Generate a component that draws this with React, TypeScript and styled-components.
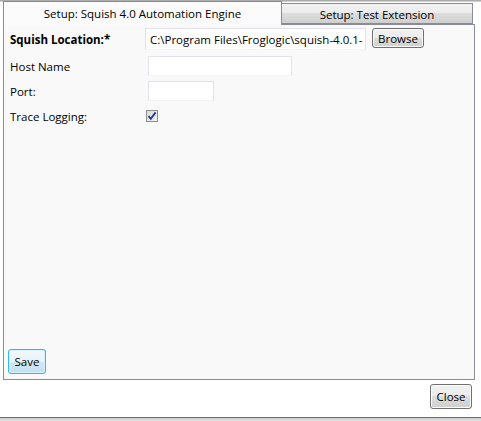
import React from 'react';
import styled, { createGlobalStyle } from 'styled-components';

const GlobalStyle = createGlobalStyle`
  html, body {
    margin: 0;
    padding: 0;
    background: #ffffff;
  }
  * {
    box-sizing: border-box;
  }
`;

const Window = styled.div`
  width: 481px;
  height: 421px;
  display: flex;
  flex-direction: column;
  background: #ffffff;
  font-family: "Open Sans", "Noto Sans", sans-serif;
  font-size: 11.5px;
  color: #000;
  overflow: hidden;
`;

const TabBar = styled.div`
  position: relative;
  height: 24px;
  display: flex;
  align-items: flex-end;
  padding-left: 3px;
  background: linear-gradient(to bottom, #8a8a8a 0, #cfcfcf 1px, #cfcfcf 2px, #ffffff 2px);
  z-index: 1;
`;

const Tab = styled.div<{ $active?: boolean; $width: number }>`
  width: ${p => p.$width}px;
  height: ${p => (p.$active ? 24 : 21)}px;
  margin-bottom: ${p => (p.$active ? -1 : 0)}px;
  display: flex;
  align-items: center;
  justify-content: center;
  border: 1px solid #898c95;
  border-bottom: ${p => (p.$active ? 'none' : '1px solid #898c95')};
  border-left: ${p => (p.$active ? '1px solid #898c95' : 'none')};
  background: ${p => (p.$active
    ? '#fbfbfb'
    : 'linear-gradient(to bottom, #f2f2f2 0%, #ebebeb 50%, #dddddd 50%, #cfcfcf 100%)')};
  padding-top: ${p => (p.$active ? 0 : 1)}px;
  white-space: nowrap;
`;

const Panel = styled.div`
  flex: none;
  height: 356px;
  margin: 0 6px 0 3px;
  border: 1px solid #898c95;
  background: #f9f9f9;
  display: flex;
  flex-direction: column;
  padding: 3px 0 5px 6px;
`;

const FieldRow = styled.div<{ $top: number }>`
  display: flex;
  align-items: flex-start;
  margin-top: ${p => p.$top}px;
`;

const Label = styled.div<{ $bold?: boolean; $height: number }>`
  width: 135px;
  height: ${p => p.$height}px;
  display: flex;
  align-items: center;
  font-weight: ${p => (p.$bold ? 700 : 400)};
  white-space: nowrap;
`;

const TextBox = styled.input<{ $indent: number; $width: number; $height: number }>`
  margin: 0 0 0 ${p => p.$indent}px;
  width: ${p => p.$width}px;
  height: ${p => p.$height}px;
  border: 1px solid #e2e3ea;
  border-bottom-color: #f4f4f4;
  background: #ffffff;
  font-family: inherit;
  font-size: 11.5px;
  color: #000;
  padding: 0 0 0 4px;
  outline: none;
`;

const Button = styled.button<{ $focused?: boolean; $width: number; $height: number }>`
  width: ${p => p.$width}px;
  height: ${p => p.$height}px;
  padding: 0;
  font-family: inherit;
  font-size: 11.5px;
  color: #000;
  border-radius: 3px;
  border: 1px solid ${p => (p.$focused ? '#2fb8e8' : '#707070')};
  background: ${p => (p.$focused
    ? 'linear-gradient(to bottom, #f3f9fd 0%, #e6f2fa 50%, #d2e8f5 50%, #c4dfef 100%)'
    : 'linear-gradient(to bottom, #f2f2f2 0%, #ebebeb 50%, #dddddd 50%, #cfcfcf 100%)')};
  box-shadow: ${p => (p.$focused ? 'inset 0 0 0 1px #d6f2fc' : 'inset 0 0 0 1px #fcfcfc')};
  display: flex;
  align-items: center;
  justify-content: center;
`;

const BrowseButton = styled(Button)`
  margin-left: 6px;
`;

const CheckBox = styled.span`
  margin-left: 1px;
  margin-top: 1px;
  width: 12px;
  height: 12px;
  border: 1px solid #8e8f8f;
  background: linear-gradient(135deg, #d8d8d8 0%, #f2f2f2 100%);
  display: flex;
  align-items: center;
  justify-content: center;
`;

const SaveButton = styled(Button)`
  margin-top: auto;
  margin-left: -2px;
`;

const Footer = styled.div`
  flex: none;
  height: 37px;
  display: flex;
  justify-content: flex-end;
  align-items: flex-start;
  padding: 4px 9px 0 0;
`;

const BottomBar = styled.div`
  flex: none;
  height: 4px;
  border-top: 1px solid #6d6d6d;
  background: linear-gradient(to bottom, #c9c9c9, #e6e6e6);
`;

export default function App() {
  return (
    <>
      <GlobalStyle />
      <Window>
        <TabBar>
          <Tab $active $width={279}>Setup: Squish 4.0 Automation Engine</Tab>
          <Tab $width={191}>Setup: Test Extension</Tab>
        </TabBar>
        <Panel>
          <FieldRow $top={0}>
            <Label $bold $height={22}>Squish Location:*</Label>
            <TextBox $indent={0} $width={221} $height={22} defaultValue={'C:\\Program Files\\Froglogic\\squish-4.0.1-'} />
            <BrowseButton $width={52} $height={20}>Browse</BrowseButton>
          </FieldRow>
          <FieldRow $top={6}>
            <Label $height={20}>Host Name</Label>
            <TextBox $indent={3} $width={144} $height={20} />
          </FieldRow>
          <FieldRow $top={5}>
            <Label $height={20}>Port:</Label>
            <TextBox $indent={3} $width={66} $height={20} />
          </FieldRow>
          <FieldRow $top={8}>
            <Label $height={14}>Trace Logging:</Label>
            <CheckBox>
              <svg width="10" height="10" viewBox="0 0 10 10">
                <path d="M1.5 5.2 L3.8 7.8 L8.6 1.4" fill="none" stroke="#1e3a8c" strokeWidth="1.8" />
              </svg>
            </CheckBox>
          </FieldRow>
          <SaveButton $focused $width={38} $height={25}>Save</SaveButton>
        </Panel>
        <Footer>
          <Button $width={42} $height={25}>Close</Button>
        </Footer>
        <BottomBar />
      </Window>
    </>
  );
}
